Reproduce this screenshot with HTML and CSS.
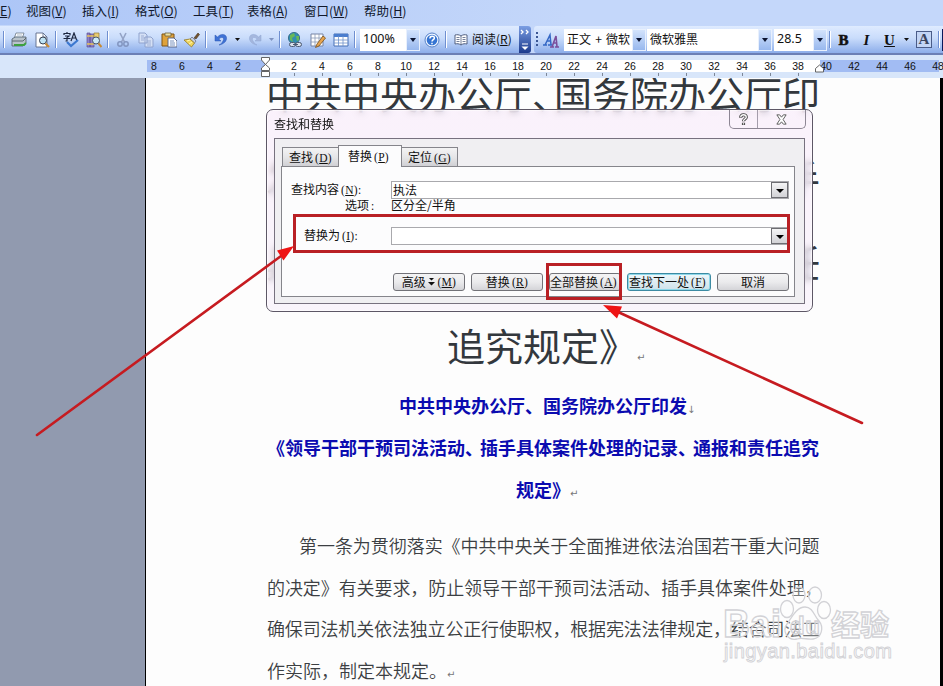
FILE: index.html
```html
<!DOCTYPE html>
<html lang="zh-CN">
<head>
    <meta charset="UTF-8">
    <meta name="viewport" content="width=device-width, initial-scale=1.0">
    <title>查找和替换</title>
    <link rel="stylesheet" href="styles.css">
</head>
<body>
<div class="window">
    <div class="menubar">
        <span class="first"><u>E</u>)</span>
        <span class="m2">视图(<u>V</u>)</span>
        <span class="m3">插入(<u>I</u>)</span>
        <span class="m4">格式(<u>O</u>)</span>
        <span class="m5">工具(<u>T</u>)</span>
        <span class="m6">表格(<u>A</u>)</span>
        <span class="m7">窗口(<u>W</u>)</span>
        <span>帮助(<u>H</u>)</span>
    </div>

    <div class="toolbars">
        <div class="toolbar standard">
            <i class="sep first-sep"></i>
            <span class="ico"><svg viewBox="0 0 16 16"><path d="M5 1h8l-2 6H3z" fill="#fff" stroke="#6b7888" stroke-width=".8"/><path d="M1 7l3-2h11v6l-3 3H1z" fill="#b9c3cb" stroke="#4c5a66" stroke-width=".8"/><path d="M1 9h11l3-3" fill="none" stroke="#5a6570"/><path d="M3 13h10l2-2" stroke="#3da040" stroke-width="2" fill="none"/><path d="M6 3h5M5 5h5" stroke="#8aa0b8" stroke-width=".7"/></svg></span>
            <span class="ico"><svg viewBox="0 0 16 16"><path d="M2 1h7l4 4v10H2z" fill="#fff" stroke="#5c6a88" stroke-width=".9"/><path d="M9 1v4h4" fill="none" stroke="#5c6a88" stroke-width=".8"/><circle cx="9" cy="8.500" r="3.500" fill="#bfe4f5" stroke="#333c4c"/><path d="M11.500 11.500l3.500 3.500" stroke="#c88a32" stroke-width="2.200"/></svg></span>
            <i class="sep"></i>
            <span class="ico"><svg viewBox="0 0 16 16"><path d="M1 3V1.500h6V3M4 0v1.500M2 4h4L4 5.500V9H2.500M.5 6.500h7M8 9l3-8 3 8M9 6h4" stroke="#1c2740" stroke-width="1.200" fill="none"/><path d="M4 10l4 4 7-6" fill="none" stroke="#3c78d0" stroke-width="2.200"/></svg></span>
            <span class="ico"><svg viewBox="0 0 16 16"><path d="M1 1h3v14H1zM4 2h4v13H4z" fill="#8d7fc4" stroke="#5b5196" stroke-width=".7"/><path d="M1 4h7M1 12h7" stroke="#e6c35c" stroke-width="1.500"/><path d="M8 1h5v10H8z" fill="#e9cd73" stroke="#927a35" stroke-width=".7"/><circle cx="10" cy="8.500" r="3.500" fill="#cbeaf8" stroke="#48566a"/><path d="M12.500 11.500l3 3.500" stroke="#c88a32" stroke-width="2"/></svg></span>
            <i class="sep"></i>
            <span class="ico"><svg viewBox="0 0 16 16"><path d="M5 1l4.500 9M11 1L6.500 10" stroke="#94a3c6" stroke-width="1.600"/><circle cx="5" cy="12" r="2.200" fill="none" stroke="#8295c0" stroke-width="1.500"/><circle cx="11" cy="12" r="2.200" fill="none" stroke="#8295c0" stroke-width="1.500"/></svg></span>
            <span class="ico"><svg viewBox="0 0 16 16"><path d="M1 1h6l2 2v8H1zM7 5h6l2 2v8H7z" fill="#d5e0f5" stroke="#8fa2cd"/><path d="M3 4h3M3 6h4M3 8h3M9 9h4M9 11h4M9 13h4" stroke="#8fa2cd" stroke-width=".8"/></svg></span>
            <span class="ico"><svg viewBox="0 0 16 16"><path d="M1 2h12v12H1z" fill="#dfa23b" stroke="#805412"/><path d="M4 1h6v3H4z" fill="#eee1a6" stroke="#6b603c" stroke-width=".8"/><path d="M7 6h6l3 3v6H7z" fill="#fff" stroke="#4e5e84" stroke-width=".9"/><path d="M9 9h4M9 11h5M9 13h5" stroke="#5577ad" stroke-width=".8"/></svg></span>
            <span class="ico"><svg viewBox="0 0 16 16"><path d="M10 6l4-5 1.500 1.500L12 7z" fill="#72522f" stroke="#47351f" stroke-width=".6"/><path d="M8 5l4 4-1.500 2L6 7z" fill="#c7cfdf" stroke="#5d6780" stroke-width=".7"/><path d="M6 7l4.500 4-3 4L0 8z" fill="#f0d65e" stroke="#937a28" stroke-width=".8"/><path d="M3 9l3-1M5 12l3-2" stroke="#fff6b5"/></svg></span>
            <i class="sep"></i>
            <span class="ico"><svg viewBox="0 0 16 16"><path d="M2 3v6h6L5.800 7C9 4 12 6 10 9c-1 2-2 3-4 4 5-1 8-4 7.500-7.500C13 2 8 1 4.500 5z" fill="#3f72d5" stroke="#2855b0" stroke-width=".5"/></svg></span>
            <i class="drop"></i>
            <span class="ico"><svg viewBox="0 0 16 16"><path d="M14 3v6H8l2.200-2C7 4 4 6 6 9c1 2 2 3 4 4-5-1-8-4-7.500-7.500C3 2 8 1 11.500 5z" fill="#a5b7dd" stroke="#8ea4d2" stroke-width=".5"/></svg></span>
            <i class="drop dim"></i>
            <i class="sep"></i>
            <span class="ico"><svg viewBox="0 0 16 16"><circle cx="7" cy="6" r="5.600" fill="#338fb0" stroke="#28617d" stroke-width=".8"/><path d="M3 3l4-2 1 3-3 2 1 4-3-2zM9 4l3 0v4l-2 1z" fill="#69b857"/><rect x="2.500" y="10.500" width="6" height="4" rx="2" fill="#d8e0ec" stroke="#4a5870"/><rect x="8.500" y="10.500" width="6" height="4" rx="2" fill="#d8e0ec" stroke="#4a5870"/><path d="M6 12.500h5" stroke="#4a5870"/></svg></span>
            <span class="ico"><svg viewBox="0 0 16 16"><path d="M1 2h12v12H1z" fill="#fff" stroke="#7784a4"/><path d="M1 6h12M1 10h12M5 2v12M9 2v12" stroke="#8c99b6" stroke-width=".8"/><path d="M13 4l2.500 2L9 14l-3.500 1.500L7 12z" fill="#e7a551" stroke="#79501b" stroke-width=".8"/></svg></span>
            <span class="ico"><svg viewBox="0 0 16 16"><path d="M1 2h14v12H1z" fill="#fff" stroke="#446fb5"/><path d="M1 2h14v3H1z" fill="#4a7dce"/><path d="M1 8h14M1 11h14M5.500 4v10M10 4v10" stroke="#6f92ca" stroke-width=".8"/></svg></span>
            <i class="sep"></i>
            <span class="combo zoom"><b>100%</b><em></em></span>
            <span class="ico"><svg viewBox="0 0 16 16"><circle cx="8" cy="8" r="7" fill="#eef5ff" stroke="#5580c8"/><circle cx="8" cy="8" r="5.300" fill="#3574d2"/><path d="M5.900 6.500c0-3 4.500-3 4.500-.500C10.400 7.700 8 7.700 8 9.500M8 10.700v1.500" stroke="#fff" stroke-width="1.500" fill="none"/></svg></span>
            <i class="sep"></i>
            <span class="ico"><svg viewBox="0 0 16 16"><path d="M8 4C6 2.500 4 2.500 2 3v9c2-.500 4-.500 6 1 2-1.500 4-1.500 6-1V3c-2-.500-4-.500-6 1z" fill="#fff" stroke="#526080"/><path d="M8 4v9M3.500 5.500h3M3.500 7.500h3M3.500 9.500h3M9.500 5.500h3M9.500 7.500h3M9.500 9.500h3" stroke="#526080" stroke-width=".8"/></svg></span>
            <span class="read">阅读(<u>R</u>)</span>
            <span class="more"><svg viewBox="0 0 11 27"><path d="M2 4l2 2-2 2M7 4l2 2-2 2" fill="none" stroke="#fff" stroke-width="1.300"/><path d="M3 18h6" stroke="#fff"/><path d="M2.500 20.500h7L6 24z" fill="#fff"/></svg></span>
        </div>
        <div class="toolbar format">
            <i class="grip"></i>
            <span class="ico aa"><svg viewBox="0 0 16 16"><path d="M0 13h4M5 13h4M2 13L7 3l1 10M4 9h4" stroke="#3568c5" stroke-width="1.500" fill="none"/><path d="M7 15h4M12 15h4M9 15l4-11 1 11M10 11h4" stroke="#7b4e9b" stroke-width="1.600" fill="none"/></svg></span>
            <span class="combo style"><b>正文 + 微软</b><em></em></span>
            <span class="combo font"><b>微软雅黑</b><em></em></span>
            <span class="combo size"><b>28.5</b><em></em></span>
            <i class="sep"></i>
            <span class="letter bold">B</span>
            <span class="letter italic">I</span>
            <span class="letter under">U</span>
            <i class="drop"></i>
            <span class="boxed">A</span>
            <i class="sep last-sep"></i>
            <i class="edge"></i>
        </div>
    </div>

    <div class="ruler">
        <div class="scale">
            <span>8</span><span>6</span><span>4</span><span>2</span><span class="zero"></span>
            <span class="t">2</span><span class="t">4</span><span class="t">6</span><span class="t">8</span><span class="t">10</span><span class="t">12</span><span class="t">14</span><span class="t">16</span><span class="t">18</span><span class="t">20</span><span class="t">22</span><span class="t">24</span><span class="t">26</span><span class="t">28</span><span class="t">30</span><span class="t">32</span><span class="t">34</span><span class="t">36</span><span class="t">38</span><span>40</span><span>42</span><span>44</span><span>46</span><span>48</span>
        </div>
        <svg class="indent" viewBox="0 0 10 22"><path d="M1 .5h8v2.500L5 7.500 1 3zM1 13.500V11l4-3.500L9 11v2.500zM1 14.500h8v5H1z" fill="#fff" stroke="#555" stroke-width=".9"/></svg>
        <svg class="indent right" viewBox="0 0 10 9"><path d="M1 8V4.500L5 1l4 3.500V8z" fill="#fff" stroke="#555" stroke-width=".9"/></svg>
    </div>

    <div class="workspace">
        <div class="page">
            <div class="title">
                <div>中共中央办公厅<span class="tight">、</span>国务院办公厅印</div>
                <div>发<span class="tight2">《</span>领导干部干预司法活动<span class="tight2">、</span>插手</div>
                <div>具体案件处理的记录<span class="tight">、</span>通报和责任</div>
                <div class="last">追究规定》<i class="mark">↵</i></div>
            </div>
            <div class="subtitle">
                <div class="s1">中共中央办公厅、国务院办公厅印发<i class="mark">↓</i></div>
                <div>《领导干部干预司法活动<span>、</span>插手具体案件处理的记录<span>、</span>通报和责任追究</div>
                <div class="s3">规定》<i class="mark">↵</i></div>
            </div>
            <div class="article">
                <div class="p1">第一条为贯彻落实《中共中央关于全面推进依法治国若干重大问题</div>
                <div class="p2">的决定》有关要求，防止领导干部干预司法活动、插手具体案件处理，</div>
                <div class="p3">确保司法机关依法独立公正行使职权，根据宪法法律规定，结合司法工</div>
                <div>作实际，制定本规定。<i class="mark">↵</i></div>
            </div>
        </div>
    </div>

    <div class="dialog">
        <div class="titlebar">
            <span>查找和替换</span>
            <div class="caption">
                <span class="help"><svg viewBox="0 0 12 14"><path d="M3 5c0-4 6-4 6-.500C9 6.500 6 6.500 6 9M6 10.500v2.500" fill="none" stroke="#444" stroke-width="3.400"/><path d="M3 4.500c0-3.500 6-3.500 6 0C9 6.500 6 6.500 6 8.500M6 11v1.500" fill="none" stroke="#fff" stroke-width="1.400"/></svg></span>
                <span class="close"><svg viewBox="0 0 14 12"><path d="M2 1h3l2 2.500L9 1h3L8.700 6l3.300 5H9L7 8.500 5 11H2l3.300-5z" fill="#fff" stroke="#555"/></svg></span>
            </div>
        </div>
        <div class="client">
            <div class="tabs">
                <span class="tab">查找<kbd>(<u>D</u>)</kbd></span>
                <span class="tab active">替换<kbd>(<u>P</u>)</kbd></span>
                <span class="tab">定位<kbd>(<u>G</u>)</kbd></span>
            </div>
            <div class="pane">
                <div class="row">
                    <label>查找内容<kbd>(<u>N</u>):</kbd></label>
                    <div class="field">执法<i class="btn-drop"></i></div>
                </div>
                <div class="row options">
                    <label>选项<kbd>:</kbd></label>
                    <div>区分全/半角</div>
                </div>
                <div class="row replace">
                    <label>替换为<kbd>(<u>I</u>):</kbd></label>
                    <div class="field"><i class="btn-drop"></i></div>
                </div>
                <div class="buttons">
                    <span class="button">高级 <svg class="dbl" viewBox="0 0 7 9"><path d="M1 1h5L3.500 3.500zM0 5h7L3.500 8.500z" fill="#111"/></svg> <kbd>(<u>M</u>)</kbd></span>
                    <span class="button">替换<kbd>(<u>R</u>)</kbd></span>
                    <span class="button all">全部替换<kbd>(<u>A</u>)</kbd></span>
                    <span class="button next">查找下一处<kbd>(<u>F</u>)</kbd></span>
                    <span class="button">取消</span>
                </div>
            </div>
        </div>
    </div>

    <svg class="watermark" viewBox="0 0 180 84">
        <g fill="#fff" fill-opacity=".3" stroke="#d2d2d6" stroke-width="1.300">
            <ellipse cx="73" cy="28" rx="6.500" ry="8.500"/>
            <ellipse cx="85" cy="14" rx="6" ry="8"/>
            <ellipse cx="101" cy="14" rx="6.500" ry="8"/>
            <ellipse cx="110" cy="29" rx="6.500" ry="8.500"/>
            <path d="M91 26c8 0 9 9 14 14 5 6 3 17-6 18-5 1-11-2-16 0-10 2-15-8-10-15 4-5 9-17 18-17z"/>
            <text class="wm-bold" x="9" y="56" font-size="38" textLength="58" lengthAdjust="spacingAndGlyphs">Bai</text>
            <text class="wm-bold" x="76" y="53" font-size="24" textLength="30">du</text>
            <text class="wm-cjk" x="117" y="55" font-size="29">经验</text>
            <text class="wm-url" x="10" y="77" font-size="20" textLength="168" stroke-width=".9">jingyan.baidu.com</text>
        </g>
    </svg>

    <svg class="notes" viewBox="0 0 943 686">
        <g fill="none" stroke="#b92025" stroke-width="3">
            <rect x="294.500" y="215.500" width="494" height="36"/>
            <rect x="547.500" y="264.500" width="73" height="34"/>
            <path d="M37 435L281 256M862 423L618 312" stroke="#c61b20" stroke-width="2.600" stroke-linecap="round"/>
        </g>
        <path d="M294 246l-17 4.500 6.500 10zM603 305l19 1.500-5 12z" fill="#ee1414"/>
    </svg>
</div>
</body>
</html>
```

FILE: styles.css
```css
* {
    box-sizing: border-box;
}
body {
    margin: 0;
    font-family: "Noto Sans CJK SC", sans-serif;
    font-size: 12px;
    color: #111;
}
i, em {
    font-style: normal;
}
.window {
    position: relative;
    width: 943px;
    height: 686px;
    overflow: hidden;
    display: flex;
    flex-direction: column;
    background: #fdfdfd;
}

/* menu */
.menubar {
    height: 25px;
    flex: none;
    display: flex;
    font-size: 12.500px;
    line-height: 21px;
    color: #10182c;
    white-space: nowrap;
    background: linear-gradient(90deg, #adc6f7, #c4d7fa 60%);
}
.menubar .first { width: 26px; }
.menubar .m2 { width: 56px; }
.menubar .m3 { width: 53px; }
.menubar .m4 { width: 58px; }
.menubar .m5 { width: 54px; }
.menubar .m6 { width: 57px; }
.menubar .m7 { width: 60px; }
u {
    text-underline-offset: 1px;
}

/* toolbars */
.toolbars {
    height: 30px;
    flex: none;
    display: flex;
    background: #c4d7fa;
    border-bottom: 2px solid #6b7fb5;
}
.toolbar {
    display: flex;
    align-items: center;
    height: 27px;
    margin-top: 1px;
    background: linear-gradient(#dfebff, #c9dcfb 45%, #8cadea);
}
.standard {
    width: 531px;
    border-radius: 0 3px 3px 0;
}
.format {
    flex: 1;
    margin-left: 3px;
    border-radius: 3px 0 0 3px;
}
.sep {
    width: 6px;
    height: 17px;
    flex: none;
    background: linear-gradient(90deg, transparent 2px, #6f8fd0 2px, #6f8fd0 3px, #fff 3px, #fff 4px, transparent 4px);
}
.first-sep {
    margin-left: 1px;
}
.ico {
    width: 23px;
    flex: none;
    display: flex;
    justify-content: center;
}
.ico svg {
    width: 16px;
    height: 16px;
}
.drop {
    width: 11px;
    height: 3px;
    flex: none;
    background: #111;
    clip-path: polygon(3px 0, 8px 0, 5.500px 3px);
}
.drop.dim {
    background: #7f93c0;
}
.combo {
    height: 22px;
    flex: none;
    display: flex;
    background: #fff;
    overflow: hidden;
}
.combo b {
    flex: 1;
    padding-left: 3px;
    font-weight: normal;
    line-height: 19px;
    overflow: hidden;
    white-space: nowrap;
}
.combo em {
    width: 14px;
    border: 1px solid #e8f0fd;
    background: linear-gradient(#d3e3fc, #98b8ee);
    display: flex;
    align-items: center;
    justify-content: center;
}
.combo em::before {
    content: "";
    border: 3.500px solid transparent;
    border-top: 4px solid #0b1430;
    border-bottom: 0;
}
.zoom { width: 60px; margin-left: 2px; }
.zoom b, .size b {
    font-family: "Noto Sans", sans-serif;
    font-size: 12.500px;
}
.style { width: 82px; }
.style b { word-spacing: 1.500px; }
.font { width: 125px; margin-left: 1px; }
.size { width: 53px; margin-left: 2px; }
.read {
    width: 47px;
    white-space: nowrap;
    line-height: 20px;
    margin-top: -1px;
}
.more {
    width: 12px;
    flex: none;
    height: 27px;
    background: linear-gradient(#7b9ee3, #1c3a8c);
    border-radius: 0 3px 3px 0;
}
.more svg {
    display: block;
    width: 11px;
    height: 27px;
}
.grip {
    width: 2px;
    height: 15px;
    margin: 0 5px 0 2px;
    background: repeating-linear-gradient(#3b5694 0 2px, transparent 2px 4px);
}
.aa {
    width: 21px;
    justify-content: flex-start;
}
.letter {
    width: 23px;
    flex: none;
    text-align: center;
    font: bold 15px/20px "Liberation Serif", serif;
}
.bold {
    margin-left: -1px;
    -webkit-text-stroke: .6px #111;
}
.italic { font-style: italic; }
.under { text-decoration: underline; }
.boxed {
    width: 16px;
    height: 17px;
    margin-left: 4px;
    border: 1px solid #4a5c88;
    background: #c3d5f5;
    text-align: center;
    font: bold 15px/15px "Liberation Serif", serif;
    color: #3b4560;
}
.format .last-sep {
    margin-left: 4px;
}
.edge {
    width: 2px;
    height: 22px;
    margin-left: auto;
    background: #0a1a5c;
}

/* ruler */
.ruler {
    position: relative;
    height: 23px;
    flex: none;
    padding: 5px 0 0 147px;
    background: #d8e6fa;
}
.scale {
    width: 792px;
    height: 17px;
    display: flex;
    background: linear-gradient(90deg, #a2bcf3 118px, #fff 118px, #fff 673px, #a2bcf3 673px) no-repeat 0 0 / 100% 12px;
}
.scale span {
    width: 28px;
    flex: none;
    text-align: center;
    font: 10.500px/12px "Liberation Sans", sans-serif;
}
.scale span:first-child {
    margin-left: -7px;
}
.scale .t {
    background: linear-gradient(#7d8798, #7d8798) no-repeat 14px 13px / 1px 3px;
}
.indent {
    position: absolute;
    left: 260px;
    top: 2px;
    width: 11px;
    height: 22px;
}
.indent.right {
    left: 814px;
    top: 9px;
    height: 9px;
}

/* document */
.workspace {
    flex: 1;
    min-height: 0;
    padding: 0 3px 0 145px;
    background: linear-gradient(90deg, #919aaf 145px, #000 145px);
}
.page {
    height: 608px;
    margin-left: 1px;
    padding-left: 121px;
    overflow: hidden;
    background: #fdfdfd;
    white-space: nowrap;
}
.title {
    margin-top: -27px;
    margin-left: -1px;
    font-size: 38px;
    line-height: 84px;
    color: #33383d;
}
.title .tight { letter-spacing: -16px; }
.title .tight2 { letter-spacing: -8px; }
.title .last { padding-left: 181px; }
.mark {
    font: 10px "DejaVu Sans", sans-serif;
    color: #777;
}
.subtitle {
    margin-top: -3px;
    font-size: 18px;
    font-weight: bold;
    line-height: 42px;
    color: #0b0bb0;
}
.subtitle span { letter-spacing: -3px; }
.subtitle .s1 { padding-left: 132px; }
.subtitle .s3 { padding-left: 249px; }
.article {
    margin-top: 15px;
    font-size: 18px;
    font-weight: 350;
    line-height: 41.700px;
    color: #3c3f43;
}
.article .p1 { padding-left: 32px; letter-spacing: -.05px; }
.article .p2 { letter-spacing: -.08px; }
.article .p3 { letter-spacing: -.16px; }

/* find and replace dialog */
.dialog {
    position: absolute;
    left: 266px;
    top: 109px;
    width: 547px;
    height: 203px;
    padding: 0 7px 7px;
    border: 1px solid #5d5766;
    border-radius: 7px;
    background: linear-gradient(rgba(248, 236, 250, .7), rgba(247, 240, 250, .7));
    backdrop-filter: blur(3px);
    box-shadow: inset 0 0 0 1px rgba(255, 255, 255, .6);
    display: flex;
    flex-direction: column;
    line-height: 16px;
}
.titlebar {
    height: 28px;
    display: flex;
    justify-content: space-between;
    line-height: 27px;
}
.caption {
    display: flex;
    height: 19px;
    margin-right: -1px;
    border: 1px solid #8d8694;
    border-top: 0;
    border-radius: 0 0 5px 5px;
}
.caption span {
    display: flex;
    align-items: center;
    justify-content: center;
}
.caption .help { width: 28px; border-right: 1px solid #a49dab; }
.caption .close { width: 47px; }
.caption svg { width: 13px; height: 13px; }
.client {
    flex: 1;
    padding: 6px 9px 6px 6px;
    border: 1px solid #77717f;
    background: #f0eff2;
    display: flex;
    flex-direction: column;
}
.tabs {
    display: flex;
    align-items: flex-end;
    height: 21px;
    padding-left: 1px;
}
.tab {
    width: 57px;
    height: 19px;
    padding: 1px 0 0 6px;
    white-space: nowrap;
    border: 1px solid #85858b;
    border-bottom: 0;
    background: linear-gradient(#f3f3f4, #e6e6e8 50%, #d0d0d4);
}
.tab.active {
    position: relative;
    width: 64px;
    height: 22px;
    margin: 0 -1px -1px;
    padding: 2px 0 0 9px;
    background: #fcfcfd;
}
kbd {
    font: 11.500px "Liberation Serif", serif;
    letter-spacing: .3px;
    margin-left: 2px;
}
.pane {
    flex: 1;
    padding: 14px 5px 0 9px;
    border: 1px solid #85858b;
    background: #fcfcfd;
}
.row {
    display: flex;
    align-items: center;
    height: 17px;
}
.row label {
    width: 100px;
    margin-top: -2px;
    white-space: nowrap;
}
.options label { padding-left: 54px; }
.options div { margin-top: -2px; }
.options { height: 16px; }
.replace { margin-top: 13px; }
.replace label { padding-left: 13px; }
.field {
    position: relative;
    flex: 1;
    height: 18px;
    padding-left: 1px;
    line-height: 15px;
    border: 1px solid #a9a9ad;
    background: #fff;
}
.btn-drop {
    position: absolute;
    right: 0;
    top: 0;
    width: 17px;
    height: 16px;
    border: 1px solid #6d6d72;
    background: linear-gradient(#f4f4f5, #d2d2d6);
    display: flex;
    align-items: center;
    justify-content: center;
}
.btn-drop::before {
    content: "";
    margin-top: 2px;
    border: 4px solid transparent;
    border-top-color: #000;
    border-bottom: 0;
}
.buttons {
    display: flex;
    gap: 6px;
    margin: 29px 0 0 102px;
}
.button {
    width: 72px;
    height: 18px;
    padding-bottom: 1px;
    flex: none;
    display: flex;
    align-items: center;
    justify-content: center;
    white-space: pre;
    border: 1px solid #727278;
    border-radius: 3px;
    background: linear-gradient(#f4f4f5, #ebebed 50%, #d4d4d8);
}
.button.all {
    padding-right: 3px;
}
.button.next {
    width: 84px;
    padding-right: 3px;
    border-color: #3c8ba3;
    box-shadow: inset 0 0 0 1px #8fd8ea;
    background: linear-gradient(#eef8fb, #cfe2ea);
}
.dbl {
    width: 7px;
    height: 9px;
}

/* overlays */
.watermark {
    position: absolute;
    left: 714px;
    top: 581px;
    width: 180px;
    height: 84px;
}
.wm-bold { font-family: "Liberation Sans", sans-serif; font-weight: bold; }
.wm-cjk { font-family: "Noto Sans CJK SC", sans-serif; font-weight: bold; }
.wm-url { font-family: "Liberation Sans", sans-serif; }
.notes {
    position: absolute;
    left: 0;
    top: 0;
    width: 943px;
    height: 686px;
}
```
